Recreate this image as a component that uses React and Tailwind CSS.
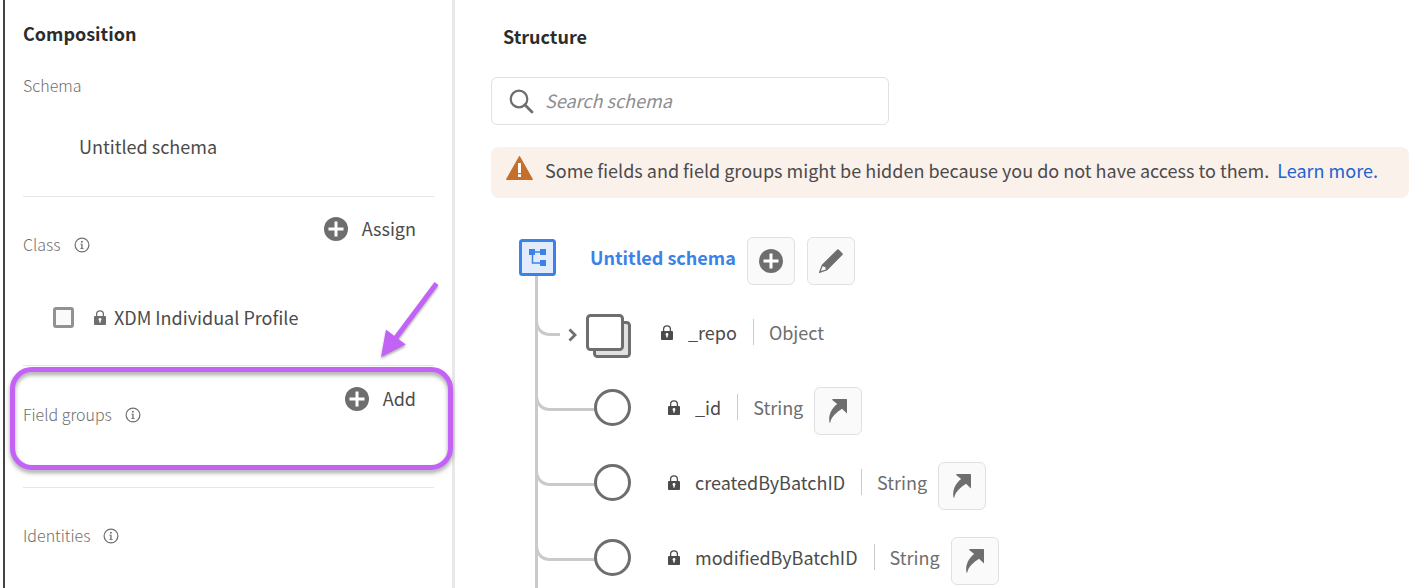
import React from "react";

function PlusCircle() {
  return (
    <svg className="size-6 shrink-0" viewBox="0 0 24 24" aria-hidden="true">
      <circle cx="12" cy="12" r="12" fill="#6e6e6e" />
      <path d="M12 4.5v15M4.5 12h15" stroke="#fff" strokeWidth="3" />
    </svg>
  );
}

function InfoIcon() {
  return (
    <svg className="size-4 shrink-0" viewBox="0 0 16 16" aria-hidden="true">
      <circle cx="8" cy="8" r="6.9" fill="none" stroke="#6e6e6e" strokeWidth="1.2" />
      <circle cx="7.9" cy="4.7" r="0.95" fill="#6e6e6e" />
      <path d="M6.300 6.700h2.300v4.500h1.100v.8H6.300v-.8h1V7.500h-1z" fill="#6e6e6e" />
    </svg>
  );
}

function LockIcon({ color }) {
  return (
    <svg className="h-[15px] w-3 shrink-0" viewBox="0 0 12 15" aria-hidden="true">
      <path d="M2.6 7V4.2a3.4 3.4 0 0 1 6.8 0V7" fill="none" stroke={color} strokeWidth="1.3" />
      <rect x="0" y="6" width="12" height="9" rx="1" fill={color} />
      <circle cx="6" cy="9.4" r="1.4" fill="#fff" />
      <rect x="5.3" y="9.6" width="1.4" height="3" fill="#fff" />
    </svg>
  );
}

function PencilIcon() {
  return (
    <svg className="size-6" viewBox="0 0 24 24" aria-hidden="true">
      <path
        fillRule="evenodd"
        fill="#6e6e6e"
        d="M18.3.5a1 1 0 0 1 1.3 0l4 4a1 1 0 0 1 0 1.3L8.3 21.2.6 23.9a.5.5 0 0 1-.6-.6l2.8-7.6zM3.6 17.2 1.9 22l4.9-1.6-.5-2.4-2.1-.5z"
      />
    </svg>
  );
}

function JumpIcon() {
  return (
    <svg className="size-6" viewBox="0 0 24 24" aria-hidden="true">
      <path
        fill="#6e6e6e"
        d="M6.5 0H20.4a.6.6 0 0 1 .6.6V14.6L16 9.8C10.500 13.500 5.500 17.500 4.300 23.400a.4.4 0 0 1-.8 0C2 15.500 6 9 11.200 5L6.200.9z"
      />
    </svg>
  );
}

function IconButton({ label, children }) {
  return (
    <button
      type="button"
      aria-label={label}
      className="mt-1.5 flex size-12 shrink-0 items-center justify-center rounded-md border border-[#e1e1e1] bg-[#fafafa]"
    >
      {children}
    </button>
  );
}

function SectionHeader({ title, action }) {
  return (
    <div className="flex items-start justify-between pr-[18px]">
      <h3 className="mt-[19px] flex items-center gap-[13px] text-base leading-6 font-light text-[#6e6e6e]">
        <span className="pb-0.5">{title}</span>
        <InfoIcon />
      </h3>
      {action && (
        <button type="button" className="flex h-8 items-center gap-[14px] text-lg leading-7 text-[#4b4b4b]">
          <PlusCircle />
          <span className="pb-0.5">{action}</span>
        </button>
      )}
    </div>
  );
}

function Sidebar() {
  return (
    <aside className="relative w-[455px] shrink-0 border-r-[3px] border-[#e8e8e8] pl-[3px]">
      <div className="h-full border-l-2 border-[#444] pr-[18px] pl-[18px]">
        <section className="border-b border-[#e6e6e6] pt-[19px] pb-9">
          <h2 className="text-lg leading-7 font-bold text-[#2c2c2c]">Composition</h2>
          <h3 className="mt-[26px] text-base leading-6 font-light text-[#6e6e6e]">Schema</h3>
          <p className="mt-[35px] pl-14 text-lg leading-7 text-[#4b4b4b]">Untitled schema</p>
        </section>
        <section className="border-b border-[#e6e6e6] pt-4 pb-[34px]">
          <SectionHeader title="Class" action="Assign" />
          <div className="mt-[45px] flex items-center pl-[30px]">
            <input
              id="xdm-profile"
              type="checkbox"
              className="size-[21px] appearance-none rounded-[3px] border-3 border-[#929292] bg-[#fafafa] checked:bg-[#929292]"
            />
            <label
              htmlFor="xdm-profile"
              className="ml-5 flex items-center gap-2 text-lg leading-7 text-[#4b4b4b]"
            >
              <LockIcon color="#6e6e6e" />
              XDM Individual Profile
            </label>
          </div>
        </section>
        <section className="border-b border-[#e6e6e6] pt-[17px] pb-[59px]">
          <SectionHeader title="Field groups" action="Add" />
        </section>
        <section className="pt-4">
          <SectionHeader title="Identities" />
        </section>
      </div>
      <div className="pointer-events-none absolute top-[367px] -right-px left-2.5 h-[103px] rounded-[22px] border-5 border-[#c363f6] drop-shadow-[0_3px_2px_rgba(0,0,0,0.35)]" />
      <svg
        className="pointer-events-none absolute top-[280px] left-[376px] h-20 w-[66px] drop-shadow-[0_2px_1px_rgba(0,0,0,0.3)]"
        viewBox="0 0 66 80"
        aria-hidden="true"
      >
        <path d="M60.500 3.500 19 59" stroke="#c363f6" strokeWidth="5" />
        <path d="M5 77 10 49.500 29.800 64.500z" fill="#c363f6" />
      </svg>
    </aside>
  );
}

function RootNode() {
  return (
    <svg className="h-[75px] w-[71px] shrink-0" viewBox="0 0 71 75" aria-hidden="true">
      <path d="M17.500 56V75" stroke="#cacaca" strokeWidth="3" />
      <rect x="1.500" y="20.500" width="34" height="34" rx="2" fill="#e2ebfb" stroke="#3b82e8" strokeWidth="3" />
      <g fill="#3b82e8">
        <rect x="10" y="29" width="6" height="6" />
        <rect x="21" y="29" width="6" height="6" />
        <rect x="21" y="40" width="6" height="6" />
      </g>
      <path d="M14 32H23M13.500 34V43H22" fill="none" stroke="#3b82e8" strokeWidth="1.500" />
    </svg>
  );
}

function StringNode() {
  return (
    <svg className="h-[75px] w-28 shrink-0" viewBox="0 0 112 75" aria-hidden="true">
      <path d="M17.500 0V75M17.500 25C17.500 34 23 39.500 31 39.500H77" fill="none" stroke="#cacaca" strokeWidth="3" />
      <circle cx="93.500" cy="37.500" r="17" fill="#fff" stroke="#6e6e6e" strokeWidth="3" />
    </svg>
  );
}

function ObjectNode() {
  return (
    <>
      <svg className="h-[75px] w-[42px] shrink-0" viewBox="0 0 42 75" aria-hidden="true">
        <path d="M17.500 0V75M17.500 25C17.500 34 23 39.500 31 39.500H41" fill="none" stroke="#cacaca" strokeWidth="3" />
      </svg>
      <button type="button" aria-label="Expand _repo" className="h-8 w-[25px] shrink-0">
        <svg className="h-8 w-[25px]" viewBox="0 0 25 32" aria-hidden="true">
          <path d="M8.500 12.500 14 18 8.500 23.500" fill="none" stroke="#6e6e6e" strokeWidth="2.800" />
        </svg>
      </button>
      <svg className="h-[75px] w-[45px] shrink-0" viewBox="0 0 45 75" aria-hidden="true">
        <rect x="8.500" y="27.500" width="35" height="34" rx="3" fill="#e1e1e1" stroke="#6e6e6e" strokeWidth="3" />
        <rect x="1.500" y="20.500" width="35" height="34" rx="3" fill="#fff" stroke="#6e6e6e" strokeWidth="3" />
      </svg>
    </>
  );
}

const fields = [
  { name: "_repo", type: "Object" },
  { name: "_id", type: "String" },
  { name: "createdByBatchID", type: "String" },
  { name: "modifiedByBatchID", type: "String" },
];

function FieldRow({ name, type }) {
  const isObject = type === "Object";
  return (
    <li className="flex h-[75px] items-center text-lg leading-[26px]">
      {isObject ? <ObjectNode /> : <StringNode />}
      <span className={`flex items-center gap-[15px] text-[#4b4b4b] ${isObject ? "ml-[30px]" : "ml-[37px]"}`}>
        <LockIcon color="#4b4b4b" />
        <span className="pb-0.5">{name}</span>
      </span>
      <span className="mr-[11px] mb-0.5 ml-4 border-l border-[#cacaca] pl-[15px] text-[#6e6e6e]">{type}</span>
      {!isObject && (
        <IconButton label={`Go to ${name}`}>
          <JumpIcon />
        </IconButton>
      )}
    </li>
  );
}

function Structure() {
  return (
    <main className="min-w-0 flex-1 overflow-hidden pt-[22px] pr-[3px] pl-9">
      <h2 className="ml-3 text-lg leading-7 font-bold text-[#2c2c2c]">Structure</h2>
      <label className="mt-[27px] flex h-12 w-[398px] items-center gap-[11px] rounded-md border border-[#e1e1e1] pl-[17px]">
        <svg className="size-[25px] shrink-0" viewBox="0 0 25 25" aria-hidden="true">
          <circle cx="10" cy="10" r="8.300" fill="none" stroke="#6e6e6e" strokeWidth="2.200" />
          <path d="M15.800 15.800 23 23" stroke="#6e6e6e" strokeWidth="2.800" strokeLinecap="round" />
        </svg>
        <input
          type="search"
          aria-label="Search schema"
          placeholder="Search schema"
          className="min-w-0 flex-1 bg-transparent pb-[3px] text-lg leading-7 text-[#4b4b4b] outline-none placeholder:text-[#8e8e8e] placeholder:italic"
        />
      </label>
      <div className="mt-[22px] flex min-h-[51px] items-center gap-3 rounded-lg bg-[#fbf1eb] pr-4 pb-[5px] pl-[15px] text-lg leading-7 text-[#4b4b4b]">
        <svg className="mb-1 h-6 w-[27px] shrink-0" viewBox="0 0 27 24" aria-hidden="true">
          <path d="M12.900.4a.7.700 0 0 1 1.200 0l12.700 22.500a.7.700 0 0 1-.6 1.100H.8a.7.700 0 0 1-.6-1.100z" fill="#c4702b" />
          <path d="M12 7h3v10h-3zM12 18.200h3v2.800h-3z" fill="#fff" />
        </svg>
        <p>
          Some fields and field groups might be hidden because you do not have access to them.
          <a href="#learn-more" className="ml-2 text-[#2063cf]">
            Learn more.
          </a>
        </p>
      </div>
      <div className="mt-[22px] ml-7">
        <div className="flex h-[75px] items-center">
          <RootNode />
          <h3 className="mr-[11px] pb-0.5 text-lg leading-7 font-bold">
            <a href="#schema" className="text-[#3b82e8]">
              Untitled schema
            </a>
          </h3>
          <div className="flex gap-3">
            <IconButton label="Add field">
              <PlusCircle />
            </IconButton>
            <IconButton label="Edit schema">
              <PencilIcon />
            </IconButton>
          </div>
        </div>
        <ul>
          {fields.map((field) => (
            <FieldRow key={field.name} {...field} />
          ))}
        </ul>
      </div>
    </main>
  );
}

export default function App() {
  return (
    <div className="flex h-screen overflow-hidden bg-white font-['Noto_Sans_CJK_SC','Noto_Sans',sans-serif]">
      <Sidebar />
      <Structure />
    </div>
  );
}
